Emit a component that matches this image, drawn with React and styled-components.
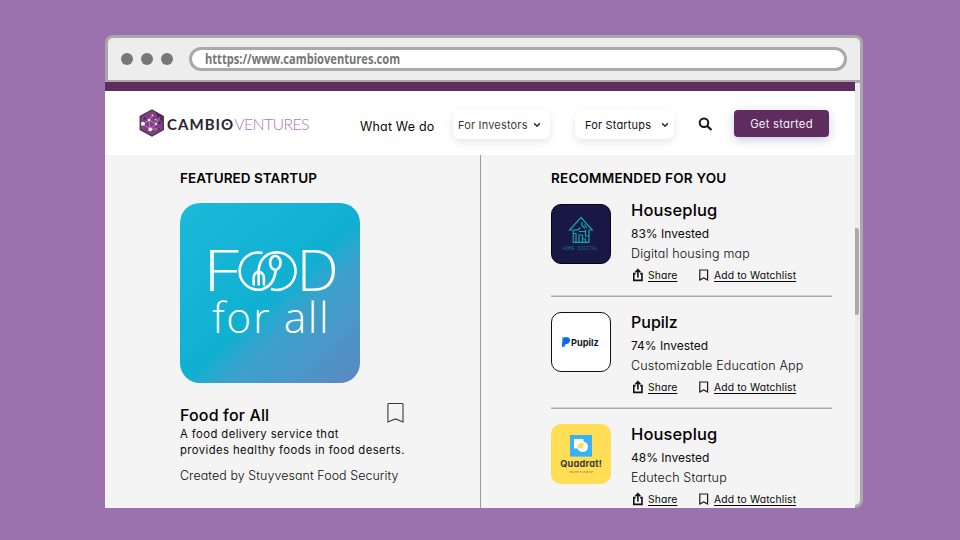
import React from "react";
import styled, { createGlobalStyle } from "styled-components";

const GlobalStyle = createGlobalStyle`
  *, *::before, *::after { box-sizing: border-box; }
  body {
    margin: 0;
    background: #9b72ae;
    font-family: Inter, "Liberation Sans", sans-serif;
    font-feature-settings: "cv11";
    color: #0b0b0b;
    overflow: hidden;
  }
`;

const Desktop = styled.main`
  height: 540px;
  padding: 35px 97px 32px 105px;
`;

const BrowserWindow = styled.div`
  width: 758px;
  height: 473px;
  display: flex;
  flex-direction: column;
`;

const Toolbar = styled.div`
  height: 47px;
  flex: none;
  display: flex;
  align-items: center;
  gap: 8px;
  padding: 0 13px;
  background: #ededed;
  border: 3px solid #a9a9a9;
  border-bottom-width: 2px;
  border-radius: 8px 8px 0 0;
`;

const Dot = styled.span`
  width: 12px;
  height: 12px;
  border-radius: 50%;
  background: #777;
`;

const AddressBar = styled.div`
  flex: 1;
  height: 24px;
  margin-left: 8px;
  padding-left: 13px;
  display: flex;
  align-items: center;
  background: #fff;
  border: 3px solid #a9a9a9;
  border-radius: 12px;
`;

const Address = styled.span`
  font: 700 13.5px/18px "Open Sans", sans-serif;
  color: #757575;
  white-space: nowrap;
  transform: scaleX(0.823);
  transform-origin: left center;
`;

const Body = styled.div`
  height: 426px;
  display: flex;
`;

const Page = styled.div`
  width: 750px;
  display: flex;
  flex-direction: column;
  background: #f4f4f4;
  overflow: hidden;
`;

const ScrollTrack = styled.div`
  width: 8px;
  padding: 146px 1px 0 0;
  background: #ededed;
  border: 3px solid #a9a9a9;
  border-top-width: 1px;
  border-left: 0;
  border-radius: 0 0 8px 0;
`;

const ScrollThumb = styled.div`
  height: 87px;
  background: #a9a9a9;
  border-radius: 0 3px 3px 0;
  margin-top: -1px;
`;

const Header = styled.header`
  height: 73px;
  flex: none;
  display: flex;
  align-items: flex-start;
  padding: 19px 26px 0 34px;
  background: #fff;
  border-top: 9px solid #5f2c5f;
`;

const Brand = styled.div`
  display: flex;
  width: 221px;
  margin-top: -1px;
`;

const BrandMark = styled.svg`
  width: 26px;
  height: 28px;
  flex: none;
`;

const BrandText = styled.span`
  font: ${(p) => (p.$light ? "300 16px/20px" : "700 15px/20px")} Lato, sans-serif;
  letter-spacing: ${(p) => (p.$light ? "-0.72px" : "1.05px")};
  color: ${(p) => (p.$light ? "#b078b8" : "#2b242c")};
  margin: ${(p) => (p.$light ? "5px 0 0 0" : "5px 0 0 2px")};
`;

const BrandO = styled.span`
  position: relative;
  &::after {
    content: "";
    position: absolute;
    left: 5px;
    top: 8px;
    width: 2px;
    height: 2px;
    border-radius: 50%;
    background: #2b242c;
  }
`;

const NavLink = styled.a`
  width: 93px;
  margin-top: 8px;
  font-size: 12.5px;
  line-height: 18px;
  letter-spacing: 0.18px;
  white-space: nowrap;
`;

const NavPill = styled.button`
  width: ${(p) => p.$width}px;
  height: 29px;
  margin: 0 ${(p) => p.$gap}px 0 0;
  padding: 1px ${(p) => p.$padRight}px 0 ${(p) => p.$padLeft}px;
  display: flex;
  align-items: center;
  justify-content: space-between;
  flex: none;
  border: 0;
  border-radius: 7px;
  background: #fff;
  box-shadow: 0 3px 9px rgba(0, 0, 0, 0.1);
  font: 400 11px/16px Inter, sans-serif;
  font-feature-settings: "cv11";
  letter-spacing: 0.17px;
  color: ${(p) => p.$color};
`;

const Chevron = styled.svg`
  width: 8px;
  height: 6px;
`;

const SearchIcon = styled.svg`
  width: 15px;
  height: 15px;
  margin: 6px 21px 0 0;
  flex: none;
`;

const PrimaryButton = styled.button`
  width: 95px;
  height: 27px;
  padding: 1px 0 0;
  flex: none;
  border: 0;
  border-radius: 4px;
  background: #5f2c5f;
  box-shadow: 0 3px 10px rgba(80, 80, 160, 0.3);
  color: #f6eef6;
  font: 400 11.3px/26px Inter, sans-serif;
  font-feature-settings: "cv11";
  letter-spacing: 0.26px;
`;

const Columns = styled.div`
  flex: 1;
  min-height: 0;
  display: flex;
`;

const Featured = styled.section`
  width: 376px;
  padding: 15px 0 0 75px;
  border-right: 1px solid #9a9a9a;
`;

const Recommended = styled.section`
  flex: 1;
  padding: 15px 23px 0 70px;
`;

const SectionTitle = styled.h2`
  margin: 0;
  font-size: 13.5px;
  line-height: 16px;
  font-weight: 600;
  letter-spacing: ${(p) => p.$spacing}px;
  white-space: nowrap;
  color: #000;
`;

const FoodCard = styled.svg`
  display: block;
  width: 180px;
  height: 180px;
  margin-top: 17px;
  border-radius: 20px;
  background: linear-gradient(137deg, #1cb9d8 0%, #14b3d5 35%, #10b0d2 52%, #3ba1cc 64%, #4a97c8 80%, #5b87c1 100%);
`;

const FeaturedRow = styled.div`
  display: flex;
  justify-content: space-between;
  align-items: flex-start;
  width: 224px;
  height: 24px;
  margin-top: 19px;
`;

const FeaturedName = styled.h3`
  margin: 3px 0 0;
  font-size: 16px;
  line-height: 20px;
  font-weight: 500;
  letter-spacing: 0.15px;
  color: #000;
`;

const BookmarkLarge = styled.svg`
  width: 17px;
  height: 21px;
`;

const Blurb = styled.p`
  margin: 0;
  font-size: 11.3px;
  line-height: 16px;
  letter-spacing: 0.41px;
  white-space: nowrap;
`;

const Creator = styled.p`
  margin: 9px 0 0;
  font-size: 12.4px;
  line-height: 18px;
  font-weight: 300;
  letter-spacing: 0.1px;
  white-space: nowrap;
`;

const StartupList = styled.div`
  display: flex;
  flex-direction: column;
  gap: 15px;
  margin-top: 14px;
`;

const StartupRow = styled.article`
  display: flex;
  gap: 20px;
  height: 97px;
  flex: none;
  border-bottom: 1px solid #adadad;
  box-shadow: inset 0 -1px #cfcfcf;
`;

const StartupLogo = styled.svg`
  width: 60px;
  height: 60px;
  flex: none;

  ${StartupRow}:first-child & {
    margin-top: 4px;
  }
`;

const StartupName = styled.h3`
  margin: 0 0 4px;
  font-size: ${(p) => p.$size}px;
  line-height: 20px;
  font-weight: 500;
  letter-spacing: ${(p) => p.$spacing}px;
  color: #000;
`;

const StartupLine = styled.p`
  margin: 0;
  font-size: ${(p) => (p.$light ? 12.5 : 12)}px;
  line-height: 20px;
  font-weight: ${(p) => (p.$light ? 300 : 400)};
  letter-spacing: ${(p) => (p.$light ? 0.16 : 0)}px;
  white-space: nowrap;
`;

const Actions = styled.div`
  display: flex;
  margin-top: 1px;
`;

const Action = styled.a`
  display: flex;
  align-items: center;
  width: ${(p) => p.$width}px;
  height: 20px;
`;

const ActionIcon = styled.svg`
  width: 14px;
  height: 14px;
  margin-right: 3px;
  flex: none;
`;

const ActionText = styled.span`
  font-size: 10.3px;
  line-height: 20px;
  letter-spacing: 0.14px;
  text-decoration: underline;
  text-decoration-thickness: 1px;
  text-underline-offset: 2px;
  text-decoration-skip-ink: none;
  white-space: nowrap;
`;

function DownChevron() {
  return (
    <Chevron viewBox="0 0 8 6">
      <path d="M1.2 1.2 4 4.2 6.8 1.2" fill="none" stroke="#222" strokeWidth="1.4" />
    </Chevron>
  );
}

function CambioMark() {
  return (
    <BrandMark viewBox="0 0 26 28">
      <path d="M13 1 24.3 7.4V20.6L13 27 1.2 20.6V7.4Z" fill="#833f83" stroke="#4d3150" strokeWidth="1.3" />
      <path d="M16.5 3.5 23.6 7.6V13L19 8.5Z" fill="#4d2752" />
      <path d="M4 15 10 11 14 6M10 11 11 20 17 15 10 11M17 15 21 8M5 16 11 20 20 20" fill="none" stroke="#d4b2d6" strokeWidth=".6" />
      <circle cx="3.9" cy="14.8" r="2" fill="#fff" />
      <circle cx="11.3" cy="20.3" r="1.9" fill="#fff" />
      <circle cx="10" cy="11" r="1.3" fill="#eee" />
      <circle cx="13.5" cy="6.3" r=".9" fill="#eee" />
      <circle cx="17" cy="15" r="1.1" fill="#fff" />
      <circle cx="16.6" cy="10.8" r=".8" fill="#eee" />
      <circle cx="5.8" cy="9.5" r="1.3" fill="#542859" />
      <circle cx="20.6" cy="14" r="1.3" fill="#48234c" />
      <circle cx="19.7" cy="20" r="1" fill="#48234c" />
    </BrandMark>
  );
}

function FoodForAll() {
  return (
    <FoodCard viewBox="0 0 180 180">
      <g fill="#fff" fontFamily="Open Sans, sans-serif" fontWeight="300">
        <text transform="translate(23 87.5) scale(1.26 1)" fontSize="57">F</text>
        <text transform="translate(116.5 87.5) scale(1.05 1)" fontSize="57">D</text>
        <text x="32" y="129.7" fontSize="42.5" letterSpacing="1.6">for all</text>
      </g>
      <g fill="none" stroke="#fff" strokeWidth="2.6">
        <path d="M82.5 50A18.6 18.6 0 1 0 82.5 86.2Q94 82.5 95.7 67.5" />
        <path d="M78.7 67C79.5 55 88 49.3 97.2 49.3A18.8 18.8 0 1 1 91 86" />
        <ellipse cx="95.3" cy="59.8" rx="5.2" ry="7" />
        <path d="M73.7 81.5V75Q73.7 70 78.7 68.5Q83.9 70 83.9 75V81.5M78.7 67V81.5" strokeLinecap="round" />
      </g>
    </FoodCard>
  );
}

function HomeDigitalLogo() {
  return (
    <StartupLogo viewBox="0 0 60 60">
      <rect x=".5" y=".5" width="59" height="59" rx="9.5" fill="#191744" stroke="#05050f" />
      <g fill="none" stroke="#13a7a5" strokeWidth="1.2">
        <path d="M21.5 26H18.6L30 13.5 41.3 26H38V38.3H22.2V26" />
        <path d="M22.5 25.8H27L29.5 23.5M31 18V21.5L34 24.5M33.5 20.5 36 24M25 38V29.5H22.5M28 38V31H31.5V38M28 27.5H34M34.5 26V32H38M34.5 38V35H32" />
      </g>
      <text x="12" y="45.8" fill="#1a6c82" fontFamily="Liberation Mono, monospace" fontSize="5" textLength="35">HOME DIGITAL</text>
    </StartupLogo>
  );
}

function PupilzLogo() {
  return (
    <StartupLogo viewBox="0 0 60 60">
      <rect x=".5" y=".5" width="59" height="59" rx="9.5" fill="#fff" stroke="#111" />
      <path d="M11 25.3H14V35H11Z" fill="#3fb2f8" />
      <path d="M13 25.3H16.2Q19.2 25.6 19 28.8 18.6 31.8 15.2 32L11 35V32.5Z" fill="#1463ee" />
      <text x="20" y="33.6" fill="#15182b" fontFamily="Inter, sans-serif" fontSize="9.2" fontWeight="700" textLength="27.8">Pupilz</text>
    </StartupLogo>
  );
}

function QuadratLogo() {
  return (
    <StartupLogo viewBox="0 0 60 60">
      <rect width="60" height="60" rx="10" fill="#ffdd55" />
      <rect x="19" y="11" width="22" height="21.6" fill="#38b1fb" />
      <rect x="23" y="15" width="9.5" height="9.5" fill="#fff" />
      <circle cx="31.7" cy="22.7" r="5.3" fill="#fff" />
      <path d="M26.5 24.5A5.3 5.3 0 0 1 32.5 18.5V21.5Q32.5 24.5 29.5 24.5Z" fill="#ffdd55" />
      <text x="9.3" y="43.2" fill="#3a3a3a" fontFamily="Inter, sans-serif" fontSize="9.2" fontWeight="700" textLength="41.5">Quadrat!</text>
      <text x="18.5" y="49" fill="#6d6438" fontFamily="Inter, sans-serif" fontSize="2.3" textLength="23.5">EDUTECH STARTUP</text>
    </StartupLogo>
  );
}

function ShareIcon() {
  return (
    <ActionIcon viewBox="0 0 14 14">
      <path d="M4.6 5.6H2.8V12.4H11V5.6H9.2M6.9 9.6V2M4.4 4.3 6.9 1.7 9.4 4.3" fill="none" stroke="#111" strokeWidth="1.6" />
    </ActionIcon>
  );
}

function BookmarkIcon() {
  return (
    <ActionIcon viewBox="0 0 14 14">
      <path d="M2.8 2H10.6V12L6.7 9.9 2.8 12Z" fill="none" stroke="#1a1a1a" strokeWidth="1.2" />
    </ActionIcon>
  );
}

const startups = [
  { name: "Houseplug", size: 16.5, spacing: 0.12, invested: "83% Invested", about: "Digital housing map", Logo: HomeDigitalLogo },
  { name: "Pupilz", size: 16, spacing: 0, invested: "74% Invested", about: "Customizable Education App", Logo: PupilzLogo },
  { name: "Houseplug", size: 16.5, spacing: 0.12, invested: "48% Invested", about: "Edutech Startup", Logo: QuadratLogo },
];

export default function App() {
  return (
    <>
      <GlobalStyle />
      <Desktop>
        <BrowserWindow>
          <Toolbar>
            <Dot />
            <Dot />
            <Dot />
            <AddressBar>
              <Address>htttps://www.cambioventures.com</Address>
            </AddressBar>
          </Toolbar>
          <Body>
            <Page>
              <Header>
                <Brand>
                  <CambioMark />
                  <BrandText>
                    CAMBI<BrandO>O</BrandO>
                  </BrandText>
                  <BrandText $light>VENTURES</BrandText>
                </Brand>
                <NavLink>What We do</NavLink>
                <NavPill $width={97} $gap={25} $padLeft={5} $padRight={9} $color="#3c3c3c">
                  For Investors
                  <DownChevron />
                </NavPill>
                <NavPill $width={99} $gap={24} $padLeft={10} $padRight={5} $color="#111">
                  For Startups
                  <DownChevron />
                </NavPill>
                <SearchIcon viewBox="0 0 15 15">
                  <circle cx="6" cy="6.8" r="4.3" fill="none" stroke="#161616" strokeWidth="2" />
                  <path d="m9.2 10 4.3 4" stroke="#161616" strokeWidth="2.3" />
                </SearchIcon>
                <PrimaryButton>Get started</PrimaryButton>
              </Header>
              <Columns>
                <Featured>
                  <SectionTitle $spacing={0.03}>FEATURED STARTUP</SectionTitle>
                  <FoodForAll />
                  <FeaturedRow>
                    <FeaturedName>Food for All</FeaturedName>
                    <BookmarkLarge viewBox="0 0 17 21">
                      <path d="M.9 2.2Q.9 1.5 1.7 1.5H15.2Q16 1.5 16 2.2V20L8.5 16.9.9 20Z" fill="none" stroke="#3b3b3b" strokeWidth="1.1" />
                    </BookmarkLarge>
                  </FeaturedRow>
                  <Blurb>
                    A food delivery service that
                    <br />
                    provides healthy foods in food deserts.
                  </Blurb>
                  <Creator>Created by Stuyvesant Food Security</Creator>
                </Featured>
                <Recommended>
                  <SectionTitle $spacing={0.2}>RECOMMENDED FOR YOU</SectionTitle>
                  <StartupList>
                    {startups.map(({ name, size, spacing, invested, about, Logo }) => (
                      <StartupRow key={about}>
                        <Logo />
                        <div>
                          <StartupName $size={size} $spacing={spacing}>{name}</StartupName>
                          <StartupLine>{invested}</StartupLine>
                          <StartupLine $light>{about}</StartupLine>
                          <Actions>
                            <Action $width={66}>
                              <ShareIcon />
                              <ActionText>Share</ActionText>
                            </Action>
                            <Action $width={110}>
                              <BookmarkIcon />
                              <ActionText>Add to Watchlist</ActionText>
                            </Action>
                          </Actions>
                        </div>
                      </StartupRow>
                    ))}
                  </StartupList>
                </Recommended>
              </Columns>
            </Page>
            <ScrollTrack>
              <ScrollThumb />
            </ScrollTrack>
          </Body>
        </BrowserWindow>
      </Desktop>
    </>
  );
}
